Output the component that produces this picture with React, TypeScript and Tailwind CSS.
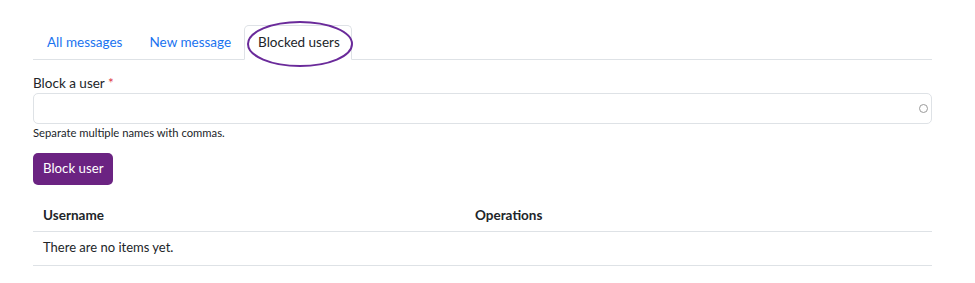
import React from "react";

const tabs = ["All messages", "New message", "Blocked users"];

export default function App() {
  return (
    <div className="relative w-[975px] h-[283px] bg-white text-[#212529]" style={{ fontFamily: 'Lato, "Noto Sans", sans-serif' }}>
      <div className="pl-[33px] pr-[43px] pt-[25px]">
        {/* Tabs */}
        <div className="flex border-b border-[#dee2e6] h-[35px] text-[13.5px]">
          <div className="flex items-center px-[14px] text-[#1a73f0]">{tabs[0]}</div>
          <div className="flex items-center pl-[13px] pr-[13px] text-[#1a73f0]">{tabs[1]}</div>
          <div className="flex items-center pl-[13px] pr-[11px] border border-[#dee2e6] border-b-white rounded-t-[5px] -mb-px text-[#212529]">
            {tabs[2]}
          </div>
        </div>

        {/* Form */}
        <div className="mt-[13px] h-[20px] text-[13.5px] leading-[20px]">
          Block a user <span className="text-[#dc3545]">*</span>
        </div>
        <div className="h-[31px] border border-[#dee2e6] rounded-[5px] flex items-center justify-end pr-[3px]">
          <span className="w-[9px] h-[9px] rounded-full border-[1.5px] border-[#9a9a9a]" />
        </div>
        <div className="mt-[1px] text-[11.25px] leading-[16px]">Separate multiple names with commas.</div>

        <button className="mt-[12px] h-[32px] px-[10px] bg-[#6b2382] text-white text-[13.25px] rounded-[5px]">
          Block user
        </button>

        {/* Table */}
        <table className="mt-[14px] w-full text-[13px] border-collapse">
          <thead>
            <tr className="border-b border-[#dee2e6]">
              <th className="text-left font-bold pl-[10px] h-[32px] w-[442px] text-[13.5px]">Username</th>
              <th className="text-left font-bold text-[13.5px]">Operations</th>
            </tr>
          </thead>
          <tbody>
            <tr className="border-b border-[#dee2e6]">
              <td colSpan={2} className="pl-[10px] h-[34px]">There are no items yet.</td>
            </tr>
          </tbody>
        </table>
      </div>

      {/* Annotation ellipse */}
      <svg className="absolute left-0 top-0 pointer-events-none" width="975" height="283">
        <ellipse cx="300" cy="44" rx="52" ry="22" fill="none" stroke="#6a2a9a" strokeWidth="2" />
      </svg>
    </div>
  );
}
